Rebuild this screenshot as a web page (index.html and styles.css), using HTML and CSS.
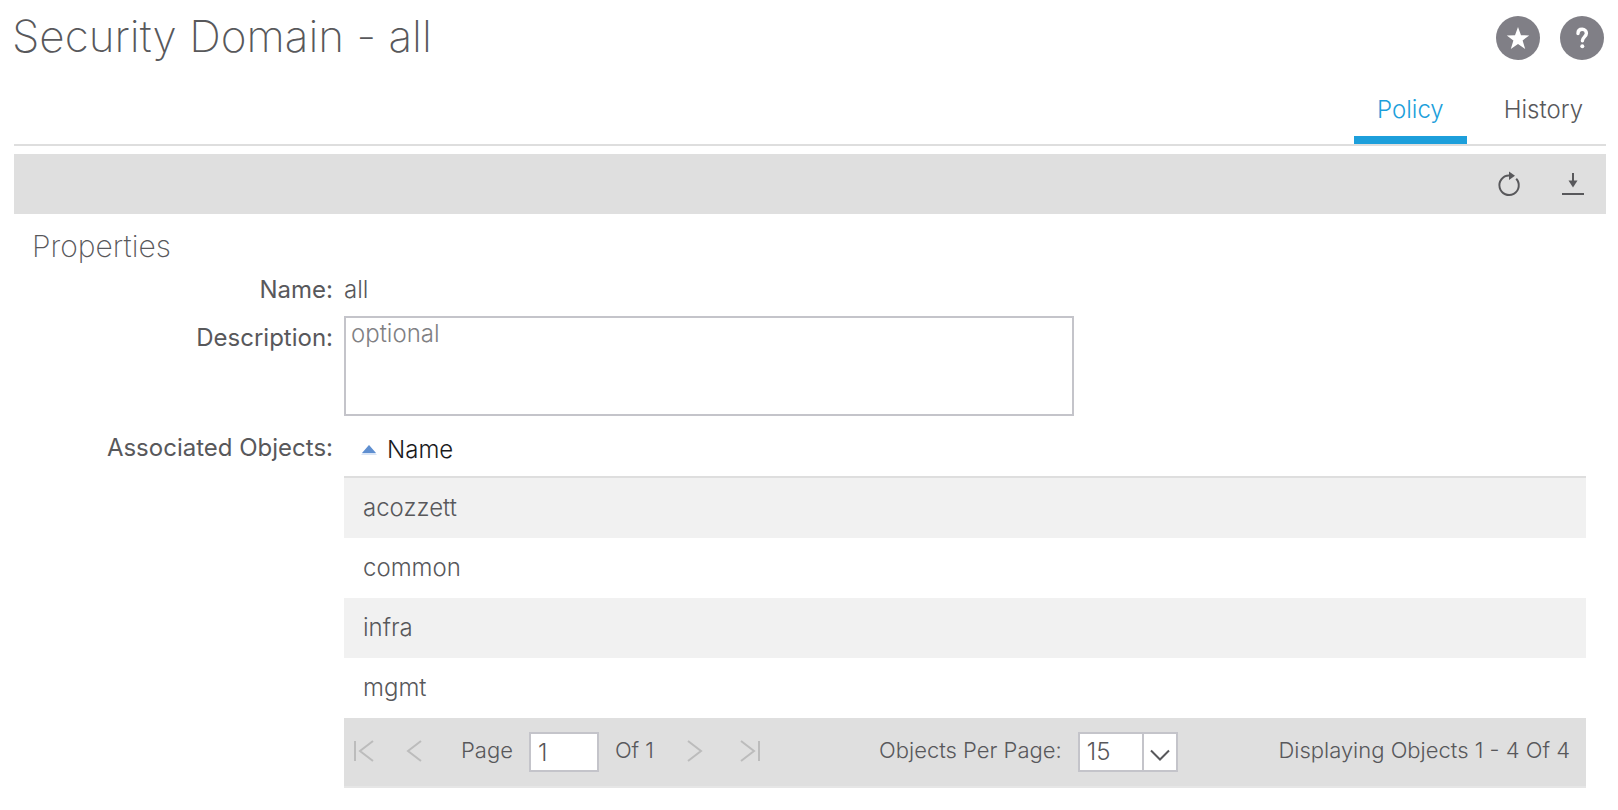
FILE: index.html
```html
<!DOCTYPE html>
<html lang="en">
<head>
<meta charset="utf-8">
<title>Security Domain - all</title>
<link rel="stylesheet" href="styles.css">
</head>
<body>
<main class="page">
  <header class="header">
    <h1 class="title">Security Domain - all</h1>
    <div class="header-actions">
      <button class="round-btn" type="button" aria-label="Favorite">
        <svg width="44" height="44" viewBox="0 0 44 44"><path fill="#fff" d="M22 11l3 8.200 8.200.2-6.600 5 2.600 8.600L22 28l-7.200 5 2.600-8.600-6.600-5 8.200-.2z"/></svg>
      </button>
      <button class="round-btn" type="button" aria-label="Help">
        <svg width="44" height="44" viewBox="0 0 44 44"><path fill="none" stroke="#fff" stroke-width="3.400" stroke-linecap="round" d="M18 17.500c0-2.600 1.700-4.200 4.200-4.200s4.200 1.600 4.200 4c0 3.400-4 3.800-4 7.500"/><circle cx="22.300" cy="30.300" r="2" fill="#fff"/></svg>
      </button>
    </div>
  </header>

  <nav class="tabs">
    <a class="tab tab-active" href="#policy">Policy</a>
    <a class="tab" href="#history">History</a>
  </nav>

  <div class="toolbar">
    <button class="icon-btn" type="button" aria-label="Refresh">
      <svg width="24" height="28" viewBox="0 0 24 28"><path fill="none" stroke="#58585b" stroke-width="2" d="M13 5.600h-1a9.700 9.700 0 1 0 7.200 3.100"/><path fill="#58585b" d="M12 1.500l6 4.300-6 4.200z"/></svg>
    </button>
    <button class="icon-btn" type="button" aria-label="Download">
      <svg width="24" height="28" viewBox="0 0 24 28"><path fill="none" stroke="#58585b" stroke-width="2" d="M12 3v9M1 24h22"/><path fill="#58585b" d="M7.500 10.500h9L12 17.500z"/></svg>
    </button>
  </div>

  <section class="properties">
    <h2 class="section-title">Properties</h2>
    <div class="fields">
      <span class="label">Name:</span>
      <span class="value">all</span>
      <label class="label label-description" for="description">Description:</label>
      <textarea class="description" id="description" placeholder="optional"></textarea>
      <span class="label label-objects" id="objects-label">Associated Objects:</span>
      <div class="grid">
        <table class="objects" aria-labelledby="objects-label">
          <thead>
            <tr><th><span class="sort"><svg width="16" height="10" viewBox="0 0 16 10"><path fill="#d9e5f6" d="M8 0l8 10H0z"/><path fill="#5f8fd0" d="M8 0l7 8H1z"/></svg>Name</span></th></tr>
          </thead>
          <tbody>
            <tr><td>acozzett</td></tr>
            <tr><td>common</td></tr>
            <tr><td>infra</td></tr>
            <tr><td>mgmt</td></tr>
          </tbody>
        </table>
        <div class="pager">
          <div class="pager-group">
            <button class="page-btn" type="button" disabled aria-label="First page"><svg width="20" height="22" viewBox="0 0 20 22"><path d="M1 1v20M19 1L6 11l13 10"/></svg></button>
            <button class="page-btn page-prev" type="button" disabled aria-label="Previous page"><svg width="16" height="22" viewBox="0 0 16 22"><path d="M15 1L2 11l13 10"/></svg></button>
            <label class="pager-text" for="page">Page</label>
            <input class="page-input" id="page" type="text" value="1">
            <span class="pager-text">Of 1</span>
            <button class="page-btn page-next" type="button" disabled aria-label="Next page"><svg width="16" height="22" viewBox="0 0 16 22"><path d="M1 1l13 10L1 21"/></svg></button>
            <button class="page-btn" type="button" disabled aria-label="Last page"><svg width="20" height="22" viewBox="0 0 20 22"><path d="M19 1v20M1 1l13 10L1 21"/></svg></button>
          </div>
          <div class="size-group">
            <label class="pager-text" for="size">Objects Per Page:</label>
            <div class="select">
              <select id="size"><option>15</option><option>25</option><option>50</option></select>
              <span class="select-arrow"><svg width="20" height="12" viewBox="0 0 20 12"><path fill="none" stroke="#58585b" stroke-width="2" d="M1 1.500l9 9 9-9"/></svg></span>
            </div>
          </div>
          <span class="pager-text summary">Displaying Objects 1 - 4 Of 4</span>
        </div>
      </div>
    </div>
  </section>
</main>
</body>
</html>
```

FILE: styles.css
```css
* {
  box-sizing: border-box;
}

body {
  margin: 0;
  background: #fff;
  color: #58585b;
  font-family: Inter, "Liberation Sans", sans-serif;
  font-size: 24px;
  font-weight: 300;
  line-height: 32px;
}

button,
input,
select,
textarea {
  font: inherit;
  color: inherit;
}

button {
  padding: 0;
  border: 0;
  background: none;
}

svg {
  display: block;
}

.page {
  padding: 10px 12px 22px;
}

.header {
  display: flex;
  justify-content: space-between;
  align-items: center;
  padding-right: 2px;
}

.title {
  margin: 0;
  padding-bottom: 4px;
  font-size: 44px;
  font-weight: 200;
  line-height: 52px;
}

.header-actions {
  display: flex;
  gap: 20px;
}

.round-btn {
  border-radius: 50%;
  background: #807f86;
}

.tabs {
  display: flex;
  justify-content: flex-end;
  gap: 14px;
  margin-left: 2px;
  padding-top: 28px;
  border-bottom: 2px solid #dedede;
}

.tab {
  padding: 0 23px 10px;
  border-bottom: 8px solid transparent;
  color: inherit;
  text-decoration: none;
}

.tab-active {
  border-color: #1d9fdb;
  color: #1d9fdb;
}

.toolbar {
  display: flex;
  justify-content: flex-end;
  align-items: center;
  gap: 40px;
  margin: 8px 0 0 2px;
  padding: 16px 21px;
  background: #dfdfdf;
}

.properties {
  padding: 12px 20px 0;
}

.section-title {
  margin: 0;
  font-size: 30px;
  font-weight: 200;
  line-height: 40px;
}

.fields {
  display: grid;
  grid-template-columns: 301px 1fr;
  column-gap: 11px;
  padding-top: 8px;
}

.label {
  font-weight: 400;
  text-align: right;
}

.label-description {
  padding-top: 16px;
}

.label-objects {
  padding-top: 16px;
}

.description {
  width: 58.8%;
  height: 100px;
  margin-top: 10px;
  padding: 0 5px;
  border: 2px solid #c4c4ca;
  background: #fff;
  resize: none;
}

.description::placeholder {
  color: #808083;
}

.grid {
  padding-top: 18px;
}

.objects {
  width: 100%;
  border-collapse: separate;
  border-spacing: 0;
}

.objects th {
  height: 44px;
  padding: 0 17px 10px;
  border-bottom: 2px solid #dedede;
  color: #1a1a1c;
  font-weight: 300;
}

.sort {
  display: flex;
  align-items: center;
  gap: 10px;
}

.objects td {
  height: 60px;
  padding: 0 19px;
}

.objects tbody tr:nth-child(odd) {
  background: #f1f1f1;
}

.pager {
  display: flex;
  align-items: center;
  padding: 14px 16px 14px 10px;
  border-bottom: 2px solid #e6e6e6;
  background: #dfdfdf;
  font-size: 22px;
}

.pager-group,
.size-group {
  display: flex;
  align-items: center;
  gap: 16px;
  white-space: nowrap;
}

.pager-text {
  padding-bottom: 4px;
  white-space: nowrap;
}

.page-btn {
  padding-bottom: 2px;
}

.page-btn svg {
  fill: none;
  stroke: #bcbcbc;
  stroke-width: 2;
}

.page-prev {
  margin: 0 23px 0 16px;
}

.page-next {
  margin: 0 21px 0 17px;
}

.page-input {
  width: 70px;
  height: 40px;
  padding: 0 7px;
  border: 2px solid #c4c4ca;
  background: #fff;
  font-size: 24px;
}

.size-group {
  margin-left: 119px;
}

.select {
  display: grid;
  grid-template-columns: 1fr 36px;
  width: 100px;
  height: 40px;
}

.select select {
  grid-area: 1 / 1 / 2 / 3;
  padding: 0 7px;
  border: 2px solid #c4c4ca;
  border-radius: 0;
  background: #fff;
  appearance: none;
  font-size: 24px;
}

.select-arrow {
  grid-area: 1 / 2;
  display: grid;
  place-items: center;
  margin: 2px 2px 2px 0;
  padding-top: 6px;
  border-left: 2px solid #c4c4ca;
  pointer-events: none;
}

.summary {
  margin-left: auto;
}
```
